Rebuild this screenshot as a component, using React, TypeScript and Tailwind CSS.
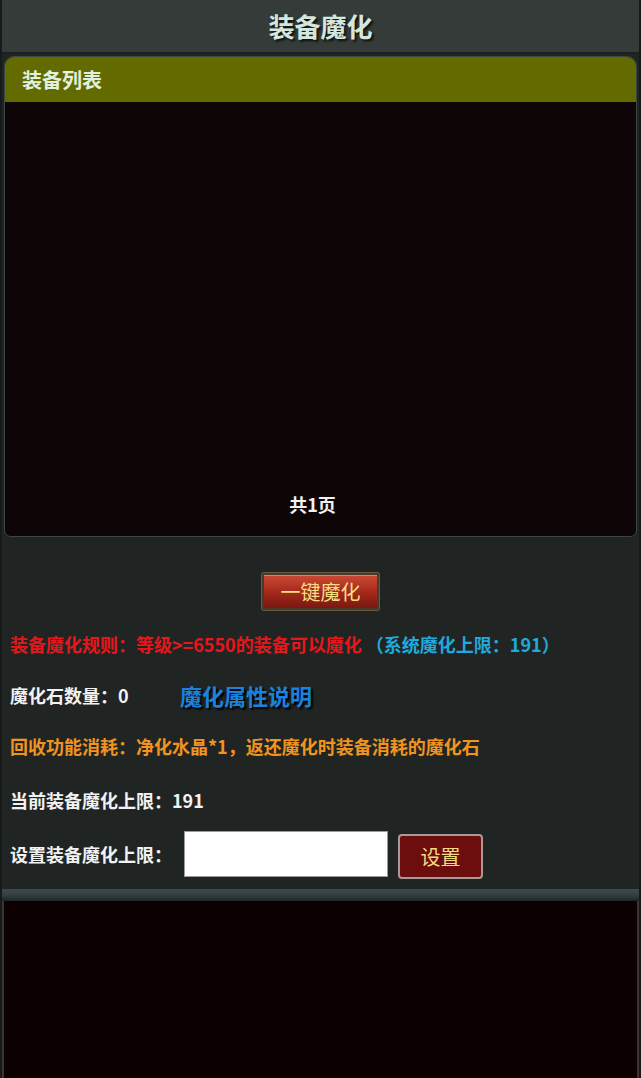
import React, { useState } from "react";

const cjk = "font-['Noto_Sans_CJK_SC','Noto_Sans',sans-serif]";

const EquipList: React.FC = () => (
  <section className="mx-[2px] mt-[2px] overflow-hidden rounded-t-[10px] rounded-b-[7px] border border-[#3b4645]">
    <div className="flex h-[45px] items-center bg-[#636a00] px-[17px] text-[20px] font-bold text-[#e3f0dd]">
      装备列表
    </div>
    <div className="flex h-[434px] flex-col items-center justify-end bg-[#0e0606] pb-[20px] pr-[16px]">
      <span className="text-[18px] font-bold leading-[24px] text-[#f2f2f2]">共1页</span>
    </div>
  </section>
);

const App: React.FC = () => {
  const [limit, setLimit] = useState<string>("");
  return (
    <div className={`flex min-h-[1078px] flex-col border-x-2 border-[#161b1a] bg-[#202524] ${cjk}`}>
      <header className="flex h-[54px] items-center justify-center border-b-2 border-[#1b2120] bg-[#343b39]">
        <h1 className="text-[26px] font-bold leading-none text-[#d5e6dd] [text-shadow:2px_2px_2px_#111]">
          装备魔化
        </h1>
      </header>

      <EquipList />

      <div className="flex justify-center pt-[36px]">
        <button className="h-[37px] w-[117px] rounded-[2px] border-2 border-[#4a3a28] bg-gradient-to-b from-[#cc4a36] via-[#a62a1c] to-[#7a1810] text-[20px] leading-none text-[#f7df82] shadow-[inset_0_1px_0_#e87a60,0_0_0_1px_#6a5a44]">
          一键魔化
        </button>
      </div>

      <div className="flex flex-col px-[8px] text-[18px] font-bold leading-[24px]">
        <p className="mt-[22px] whitespace-nowrap">
          <span className="text-[#e5171b]">装备魔化规则：等级&gt;=6550的装备可以魔化</span>
          <span className="text-[#20a9dd]"> （系统魔化上限：191）</span>
        </p>

        <div className="mt-[27px] flex items-center">
          <span className="w-[170px] text-[#f2f2f2]">魔化石数量：0</span>
          <a className="text-[22px] text-[#1b82dc] [text-shadow:2px_2px_2px_#000]">魔化属性说明</a>
        </div>

        <p className="mt-[27px] text-[#f1941f]">回收功能消耗：净化水晶*1，返还魔化时装备消耗的魔化石</p>

        <p className="mt-[30px] text-[#f2f2f2]">当前装备魔化上限：191</p>

        <div className="mt-[16px] flex items-center">
          <span className="w-[174px] text-[#f2f2f2]">设置装备魔化上限：</span>
          <input
            value={limit}
            onChange={(e) => setLimit(e.target.value)}
            className="h-[46px] w-[204px] border border-[#9a9a9a] bg-white px-2 text-[16px] text-black outline-none"
          />
          <button className="ml-[10px] mt-[6px] h-[45px] w-[85px] rounded-[4px] border-2 border-[#a89a96] bg-[#6c0e0e] text-[20px] font-normal text-[#f6dc80]">
            设置
          </button>
        </div>
      </div>

      <div className="mt-[10px] h-[12px] bg-gradient-to-b from-[#3e4a4e] via-[#34403f] to-[#1e2626]" />
      <div className="flex-1 border-x-2 border-[#3a3636] bg-[#0c0000]" />
    </div>
  );
};

export default App;
